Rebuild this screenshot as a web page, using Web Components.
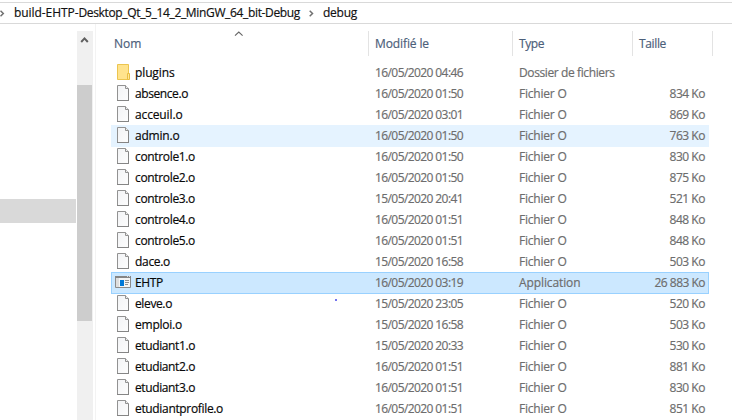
<!DOCTYPE html>
<html lang="fr"><head><meta charset="utf-8"><title>debug</title>
<style>html,body{margin:0;height:420px;overflow:hidden;background:#fff}</style></head>
<body><file-explorer></file-explorer>
<script>
// Text label whose tracking is adjusted to a given width.
class FitText extends HTMLElement{
  constructor(){super();this.attachShadow({mode:'open'}).innerHTML='<style>:host{display:inline-block;white-space:pre;line-height:20px;-webkit-text-stroke:.18px currentColor}span{display:inline-block}</style><span><slot></slot></span>';}
  connectedCallback(){
    const w=+this.getAttribute('w'),s=this.shadowRoot.querySelector('span');
    s.style.letterSpacing='0px';
    const n=this.textContent.length,r=s.getBoundingClientRect().width;
    if(w&&n&&r)s.style.letterSpacing=((w-r)/n)+'px';
  }
}
const ICONS={
 file:'<defs><linearGradient id="g" x2="1" y2="1"><stop stop-color="#f2f3f5"/><stop offset="1" stop-color="#fdfdfd"/></linearGradient></defs><path d="M2.5.5h8l3 3v12h-11z" fill="url(#g)" stroke="#929292"/><path d="M10.5.5v3h3" fill="#eee" stroke="#929292"/><path d="M2 15.5h12M13.5 4v12" stroke="#858585"/>',
 folder:'<path d="M2.5.5h11v15h-11z" fill="#ffe38d" stroke="#ecc54f"/><path d="M12.5 9.5h2v6h-2z" fill="#ffe795" stroke="#e8bd43"/>',
 app:'<path d="M.5 2.5h15v11H.5z" fill="#f4f4f4" stroke="#8b8b8b"/><path d="M0 2h16v2H0z" fill="#858585"/><path d="M12 2h1v1h-1zM14 2h1v1h-1z" fill="#ddd"/><path d="M1 4h3v9H1z" fill="#dedede"/><path d="M5 6h4v6H5z" fill="#0078d7"/><path d="M10 6.5h4M10 8.5h4M10 10.5h3" stroke="#909090"/>'
};
class FileIcon extends HTMLElement{
  constructor(){super();this.attachShadow({mode:'open'});}
  connectedCallback(){this.shadowRoot.innerHTML='<style>:host{display:block;width:16px;height:16px}svg{display:block}</style><svg width="16" height="16" fill="none">'+ICONS[this.getAttribute('kind')]+'</svg>';}
}
class PathBar extends HTMLElement{
  constructor(){super();this.attachShadow({mode:'open'}).innerHTML=`<style>
  :host{display:flex;box-sizing:border-box;height:22px;margin-top:2px;border-top:1px solid #d9d9d9;border-bottom:1px solid #d9d9d9;color:#111}
  svg{display:block;margin-top:7px;flex:none}.a{margin-right:9px}.b{margin:7px 9px 0 9px}</style>
  <svg class="a" width="5" height="7" fill="none"><path d="M.5 .8 3.3 3.5.5 6.2" stroke="#707070" stroke-width="1.5"/></svg>
  <fit-text w="64.5">build-EHTP-</fit-text><fit-text w="221.5">Desktop_Qt_5_14_2_MinGW_64_bit-Debug</fit-text>
  <svg class="b" width="5" height="7" fill="none"><path d="M.7 .8 3.5 3.5.7 6.2" stroke="#707070" stroke-width="1.5"/></svg>
  <fit-text w="34">debug</fit-text>`;}
}
class TreePane extends HTMLElement{
  constructor(){super();this.attachShadow({mode:'open'}).innerHTML=`<style>
  :host{display:flex;width:96px;box-sizing:border-box;border-right:1px solid #f3f3f3}
  .tree{width:77px;padding-top:175px}.sel{width:76px;height:24px;background:#d9d9d9}
  .bar{width:16px;margin-top:7px;background:#f0f0f0}.up{height:54px}
  .up svg{display:block}.thumb{width:15px;height:236px;background:#cdcdcd}</style>
  <div class="tree"><div class="sel"></div></div>
  <div class="bar"><div class="up"><svg width="16" height="16" fill="none"><path d="M4.2 11 7.5 7.4 10.8 11" stroke="#606060" stroke-width="2"/></svg></div><div class="thumb"></div></div>`;}
}
class ColumnHead extends HTMLElement{
  constructor(){super();this.attachShadow({mode:'open'}).innerHTML=`<style>
  :host{display:grid;grid-template-columns:258px 144px 120px 80px;height:25px;color:#4c607a}
  div{box-sizing:border-box;border-right:1px solid #e3e3e3;padding:3px 0 0 6px;position:relative}
  div.first{padding-left:3px}svg{position:absolute;left:123px;top:0}</style>
  <div class="first"><fit-text w="27.5">Nom</fit-text><svg width="10" height="6" fill="none"><path d="M1 4.7 4.8 1 8.6 4.7" stroke="#656565" stroke-width="1.1"/></svg></div>
  <div><fit-text w="54">Modifié le</fit-text></div><div><fit-text w="25">Type</fit-text></div><div><fit-text w="27">Taille</fit-text></div>`;}
}
class FileRow extends HTMLElement{
  constructor(){super();this.attachShadow({mode:'open'});}
  connectedCallback(){
    const a=k=>this.getAttribute(k)||'';
    this.shadowRoot.innerHTML=`<style>
    :host{display:grid;grid-template-columns:20px 240px 144px 106px 80px;width:598px;height:22px;margin-bottom:-1px;box-sizing:border-box;border:1px solid transparent;padding-left:3px;color:#6d6d6d}
    :host([state=hover]){background:#e5f3ff}:host([state=selected]){background:#cce8ff;border-color:#99d1ff}
    file-icon{margin-top:1px}.n{color:#080808}.s{text-align:right}</style>
    <file-icon kind="${a('kind')}"></file-icon><fit-text class="n" w="${a('nw')-.5}">${a('name')}</fit-text><fit-text w="88">${a('date')}</fit-text><fit-text w="${a('tw')}">${a('type')}</fit-text><fit-text class="s" w="${a('sw')}">${a('size')}</fit-text>`;
  }
}
const FILES=[['plugins',40,'16/05/2020 04:46',''],['absence.o',53.5,'16/05/2020 01:50','834'],['acceuil.o',48,'16/05/2020 03:01','869'],['admin.o',45,'16/05/2020 01:50','763'],['controle1.o',60.5,'16/05/2020 01:50','830'],['controle2.o',60.5,'16/05/2020 01:50','875'],['controle3.o',60.5,'15/05/2020 20:41','521'],['controle4.o',60.5,'16/05/2020 01:51','848'],['controle5.o',60.5,'16/05/2020 01:51','848'],['dace.o',35.5,'15/05/2020 16:58','503'],['EHTP',28.5,'16/05/2020 03:19','26 883'],['eleve.o',37.5,'15/05/2020 23:05','520'],['emploi.o',47.5,'15/05/2020 16:58','503'],['etudiant1.o',60.5,'15/05/2020 20:33','530'],['etudiant2.o',60.5,'16/05/2020 01:51','881'],['etudiant3.o',60.5,'16/05/2020 01:51','830'],['etudiantprofile.o',88.5,'16/05/2020 01:51','851']];
class FileList extends HTMLElement{
  constructor(){super();this.attachShadow({mode:'open'}).innerHTML='<style>:host{display:block;padding:7px 0 0 15px}.rows{padding-top:6px}</style><column-head></column-head><div class="rows">'+FILES.map(([n,nw,d,s])=>{
    const dir=n==='plugins',app=n==='EHTP';
    return `<file-row kind="${dir?'folder':app?'app':'file'}" name="${n}" nw="${nw}" date="${d}" type="${dir?'Dossier de fichiers':app?'Application':'Fichier O'}" tw="${dir?95.5:app?61.5:47.5}" size="${s&&s+' Ko'}" sw="${app?50.5:35.5}" state="${app?'selected':n==='admin.o'?'hover':''}"></file-row>`}).join('')+'</div>';}
}
class FileExplorer extends HTMLElement{
  constructor(){super();this.attachShadow({mode:'open'}).innerHTML=`<style>
  :host{display:flex;flex-direction:column;width:732px;height:420px;overflow:hidden;position:relative;background:#fff;font:12px "Open Sans","Noto Sans",sans-serif}
  .main{display:flex;flex:1;min-height:0}
  .dot{position:absolute;left:335px;top:299px;width:2px;height:2px;background:#4646e8;border-radius:1px}</style>
  <path-bar></path-bar><div class="main"><tree-pane></tree-pane><file-list></file-list></div><i class="dot"></i>`;}
}
Object.entries({'fit-text':FitText,'file-icon':FileIcon,'path-bar':PathBar,'tree-pane':TreePane,'column-head':ColumnHead,'file-row':FileRow,'file-list':FileList,'file-explorer':FileExplorer}).forEach(([n,c])=>customElements.define(n,c));
</script></body></html>
